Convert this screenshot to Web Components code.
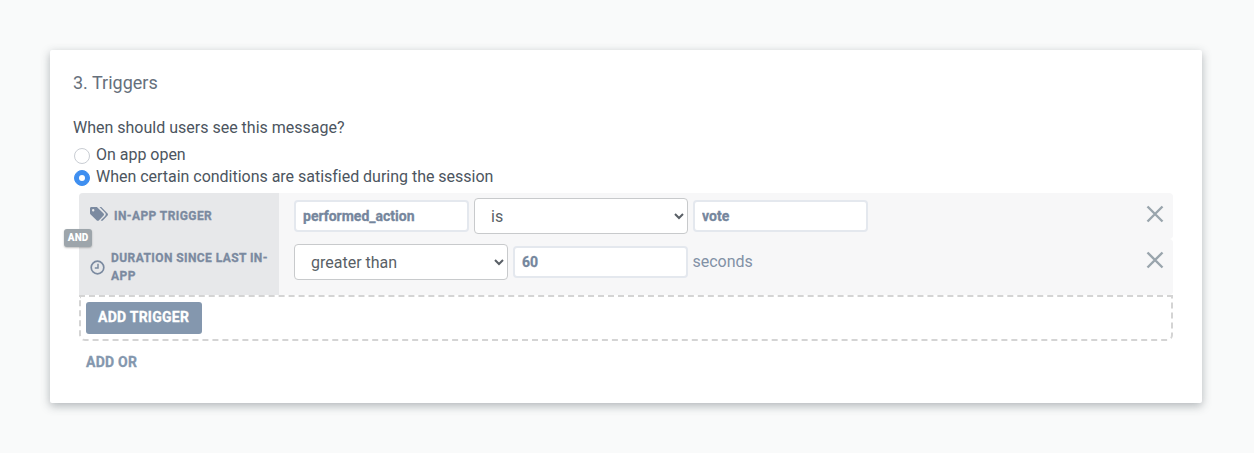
<!DOCTYPE html>
<html lang="en">
<head>
<title>Triggers</title>
<style>
    html, body {margin:0; height:100%; background:#f9fafa;}
    body {font-family:Roboto, "Liberation Sans", sans-serif;}
    section-card {margin:50px 52px 0 50px;}
</style>

<template id="card-template">
    <style>
        :host {display:block; position:relative; background:#fff; height:353px; box-sizing:border-box; padding:22px 30px 0 23px; border-radius:2px;
            box-shadow:0 3px 10px rgba(60,70,80,.38); color:#4c5560;}
        h2 {margin:0 0 25px; font:400 18px/21px Roboto, sans-serif; color:#66707c;}
    </style>
    <h2><slot name="title"></slot></h2>
    <slot></slot>
</template>

<template id="radio-template">
    <style>
        :host {display:flex; align-items:center; height:22px; font-size:16px; color:#4c5560; position:relative; top:-1px;}
        i {width:14px; height:14px; border-radius:50%; border:1px solid #c9cdd3; background:#fff; margin:3px 6px 0 1px; flex:none; box-sizing:content-box;}
        :host([checked]) i {border:1px solid #3f8ff0; background:#3f8ff0; position:relative;}
        :host([checked]) i::after {content:''; position:absolute; left:4px; top:4px; width:6px; height:6px; border-radius:50%; background:#fff;}
        span {letter-spacing:-.02px;}
    </style>
    <i></i><span><slot></slot></span>
</template>

<template id="row-template">
    <style>
        :host {display:flex; background:#f7f7f8; border-radius:4px; position:relative; box-sizing:border-box;}
        .label {width:200px; flex:none; box-sizing:border-box; background:#e7e8ea; display:flex; align-items:center; padding:0 8px 0 11px;
            font:700 12px/18px Roboto, sans-serif; letter-spacing:.42px; -webkit-text-stroke:.3px #7b8aa0; color:#7b8aa0; text-transform:uppercase;}
        :host([first]) .label {border-radius:4px 0 0 0;}
        ::slotted([slot=icon]) {flex:none; margin-right:6px;}
        .body {flex:1; display:flex; align-items:flex-start; gap:5px; padding:5px 0 0 15px;}
        .close {position:absolute; right:9px; top:12px; width:18px; height:18px;}
    </style>
    <div class="label"><slot name="icon"></slot><span><slot name="label"></slot></span></div>
    <div class="body"><slot></slot></div>
    <svg class="close" viewBox="0 0 18 18"><path d="M1.500 1.500L16.500 16.500M16.500 1.500L1.500 16.500" stroke="#9aa5ad" stroke-width="2.400" fill="none"/></svg>
</template>

<template id="text-template">
    <style>
        :host {display:flex; align-items:center; height:36px;}
        input {display:block; width:175px; height:32px; box-sizing:border-box; border:2px solid #e4e8ee; border-radius:4px; background:#fff;
            padding:0 6px 0 7px; font:700 14px Roboto, sans-serif; -webkit-text-stroke:.3px #75869d; color:#75869d; outline:none;}
    </style>
    <input type="text">
</template>

<template id="select-template">
    <style>
        :host {display:block;}
        select {display:block; width:214px; height:36px; box-sizing:border-box; border:1px solid #c8cacc; border-radius:4px; background:#fff;
            padding:0 12px; font:400 16px Roboto, sans-serif; color:#595f66; outline:none;}
    </style>
    <select></select>
</template>

<template id="badge-template">
    <style>
        :host {display:block; position:absolute; left:14px; top:179px; width:28px; height:18px; background:#9da5ab; border-radius:3px;
            color:#fff; font:900 10px/18px Roboto, sans-serif; text-align:center; box-shadow:0 1px 2px rgba(0,0,0,.25); z-index:2;}
    </style>
    <slot></slot>
</template>

<template id="group-template">
    <style>
        :host {display:block; margin-left:6px; width:1094px;}
        .rows {display:flex; flex-direction:column;}
        .add {height:46px; box-sizing:border-box; border:2px dashed #d4d4d4; border-radius:0 0 6px 6px; padding:5px 5px;}
        .or {padding:14px 7px 0; height:20px;}
    </style>
    <div class="rows"><slot></slot></div>
    <div class="add"><slot name="add"></slot></div>
    <div class="or"><slot name="or"></slot></div>
</template>

<template id="button-template">
    <style>
        :host {display:inline-block; height:32px; width:116px; box-sizing:border-box; padding:0 12px; background:#8497ae; border-radius:3px; color:#fff;
            font:700 14px/31px Roboto, sans-serif; letter-spacing:.25px; -webkit-text-stroke:.3px currentColor; text-transform:uppercase;}
        :host([plain]) {display:block; width:auto; background:none; color:#8497ae; padding:0; height:auto; line-height:14px;}
    </style>
    <slot></slot>
</template>
</head>
<body>

<section-card>
    <span slot="title">3. Triggers</span>
    <div style="font-size:16px;line-height:20px;margin-bottom:6px;color:#4c5560">When should users see this message?</div>
    <radio-option>On app open</radio-option>
    <radio-option checked>When certain conditions are satisfied during the session</radio-option>
    <div style="height:5px"></div>
    <trigger-group>
        <trigger-row first style="height:46px">
            <svg slot="icon" width="18" height="15" viewBox="0 0 18 15" style="margin-top:-4px"><path fill="#7b8aa0" d="M0 1.400C0 .6.600 0 1.400 0h5c.4 0 .8.200 1 .4l6.200 6.200c.5.500.5 1.400 0 2l-4.800 4.800c-.6.500-1.500.500-2 0L.4 7.200C.2 7 0 6.600 0 6.200zM3.200 2a1.200 1.200 0 1 0 0 2.400 1.200 1.200 0 0 0 0-2.400z"/><path fill="#7b8aa0" d="M9.500 0h1.200c.4 0 .8.200 1 .4l5.900 6.200c.5.500.5 1.400 0 2l-4.800 4.800c-.5.500-1.300.500-1.800 0l-.2-.2 4.300-4.300c.9-.900.9-2.300 0-3.200z"/></svg>
            <span slot="label">In-App Trigger</span>
            <text-box value="performed_action"></text-box>
            <select-box value="is"></select-box>
            <text-box value="vote"></text-box>
        </trigger-row>
        <trigger-row style="height:56px">
            <svg slot="icon" width="15" height="15" viewBox="0 0 15 15"><circle cx="7.500" cy="7.500" r="6.300" fill="none" stroke="#7b8aa0" stroke-width="1.700"/><path d="M8 3.800V8H4.800" fill="none" stroke="#7b8aa0" stroke-width="1.500"/></svg>
            <span slot="label">Duration since last in-app</span>
            <select-box value="greater than"></select-box>
            <text-box value="60"></text-box>
            <span style="font-size:16px;line-height:36px;color:#8291a6;margin-left:-.5px">seconds</span>
        </trigger-row>
        <action-button slot="add">Add Trigger</action-button>
        <action-button slot="or" plain>Add Or</action-button>
    </trigger-group>
    <and-badge>AND</and-badge>
</section-card>

<script>
    class TemplateElement extends HTMLElement {
        constructor(id) {
            super();
            const shadow = this.attachShadow({mode: 'open'});
            shadow.appendChild(document.getElementById(id).content.cloneNode(true));
        }
    }

    class SectionCard extends TemplateElement { constructor() { super('card-template'); } }
    class RadioOption extends TemplateElement { constructor() { super('radio-template'); } }
    class TriggerRow extends TemplateElement { constructor() { super('row-template'); } }
    class AndBadge extends TemplateElement { constructor() { super('badge-template'); } }
    class TriggerGroup extends TemplateElement { constructor() { super('group-template'); } }
    class ActionButton extends TemplateElement { constructor() { super('button-template'); } }

    class TextBox extends TemplateElement {
        constructor() { super('text-template'); }
        connectedCallback() {
            this.shadowRoot.querySelector('input').value = this.getAttribute('value');
        }
    }

    class SelectBox extends TemplateElement {
        constructor() { super('select-template'); }
        connectedCallback() {
            const option = document.createElement('option');
            option.textContent = this.getAttribute('value');
            this.shadowRoot.querySelector('select').appendChild(option);
        }
    }

    customElements.define('section-card', SectionCard);
    customElements.define('radio-option', RadioOption);
    customElements.define('trigger-row', TriggerRow);
    customElements.define('and-badge', AndBadge);
    customElements.define('trigger-group', TriggerGroup);
    customElements.define('action-button', ActionButton);
    customElements.define('text-box', TextBox);
    customElements.define('select-box', SelectBox);
</script>

</body>
</html>
